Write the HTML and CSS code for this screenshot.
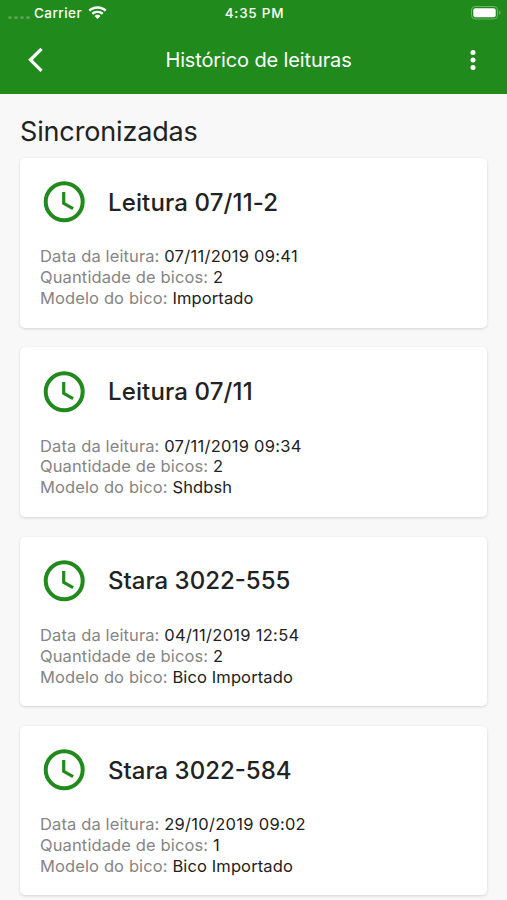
FILE: index.html
```html
<!DOCTYPE html>
<html lang="pt-BR">
<head>
<meta charset="utf-8">
<title>Histórico de leituras</title>
<link rel="stylesheet" href="styles.css">
</head>
<body>
<header>
  <div class="status">
    <div class="carrier"><i></i><i></i><i></i><i></i><span>Carrier</span>
      <svg class="wifi" width="19" height="14" viewBox="0 0 20 14" fill="#fff"><path d="M10 0C6.200 0 3 1.300.5 3.700L2.300 5.500C4.400 3.500 7 2.500 10 2.500s5.600 1 7.700 3l1.800-1.800C17 1.300 13.800 0 10 0z"/><path d="M10 4.500c-2.500 0-4.700.9-6.300 2.500l1.800 1.800C6.700 7.600 8.200 7 10 7s3.300.6 4.500 1.800L16.300 7C14.700 5.400 12.500 4.500 10 4.500z"/><path d="M10 8.900c-1.300 0-2.300.4-3.100 1.300L10 13.300l3.100-3.100C12.300 9.300 11.300 8.900 10 8.900z"/></svg>
    </div>
    <div class="time">4:35 PM</div>
    <svg class="battery" width="30" height="14" viewBox="0 0 30 14"><rect x=".5" y=".5" width="26" height="12.500" rx="3.500" fill="none" stroke="#6db46b"/><rect x="2.300" y="2.300" width="22.400" height="9" rx="2" fill="#fff"/><path d="M28 4.800q1.500.5 1.500 2t-1.500 2z" fill="#6db46b"/></svg>
  </div>
  <div class="toolbar">
    <svg class="back" width="18" height="28" viewBox="0 0 18 28"><path d="M14.500 2.800L3.500 13.800l11 11" fill="none" stroke="#fff" stroke-width="3.300"/></svg>
    <h1>Histórico de leituras</h1>
    <svg class="more" width="8" height="22" viewBox="0 0 8 22" fill="#fff"><circle cx="4" cy="3.600" r="2.500"/><circle cx="4" cy="11" r="2.500"/><circle cx="4" cy="18.400" r="2.500"/></svg>
  </div>
</header>
<main>
  <h2>Sincronizadas</h2>
  <article class="card">
    <div class="head"><svg class="clock" viewBox="0 0 42 42"><circle cx="21.200" cy="20.800" r="18.500"/><path d="M20.700 11v11.300l9.400 5.300"/></svg><h3 class="wide">Leitura 07/11-2</h3></div>
    <p>Data da leitura: <b class="date">07/11/2019 09:41</b></p><p>Quantidade de bicos: <b>2</b></p><p>Modelo do bico: <b>Importado</b></p>
  </article>
  <article class="card">
    <div class="head"><svg class="clock" viewBox="0 0 42 42"><circle cx="21.200" cy="20.800" r="18.500"/><path d="M20.700 11v11.300l9.400 5.300"/></svg><h3 class="wide">Leitura 07/11</h3></div>
    <p>Data da leitura: <b class="date">07/11/2019 09:34</b></p><p>Quantidade de bicos: <b>2</b></p><p>Modelo do bico: <b>Shdbsh</b></p>
  </article>
  <article class="card">
    <div class="head"><svg class="clock" viewBox="0 0 42 42"><circle cx="21.200" cy="20.800" r="18.500"/><path d="M20.700 11v11.300l9.400 5.300"/></svg><h3>Stara 3022-555</h3></div>
    <p>Data da leitura: <b class="date">04/11/2019 12:54</b></p><p>Quantidade de bicos: <b>2</b></p><p>Modelo do bico: <b>Bico Importado</b></p>
  </article>
  <article class="card">
    <div class="head"><svg class="clock" viewBox="0 0 42 42"><circle cx="21.200" cy="20.800" r="18.500"/><path d="M20.700 11v11.300l9.400 5.300"/></svg><h3>Stara 3022-584</h3></div>
    <p>Data da leitura: <b class="date">29/10/2019 09:02</b></p><p>Quantidade de bicos: <b>1</b></p><p>Modelo do bico: <b>Bico Importado</b></p>
  </article>
</main>
</body>
</html>
```
FILE: styles.css
```css
* { box-sizing: border-box; margin: 0; padding: 0; }
body { height: 900px; overflow: hidden; background: #f8f8f8; color: #222; font-family: Inter, sans-serif; }
svg { display: block; flex: none; }
header { height: 94px; background: #218a1c; color: #fff; }
.status { height: 26px; display: grid; grid-template-columns: 1fr auto 1fr; align-items: center; padding: 0 6px 0 8px; font-size: 13.500px; font-weight: 500; }
.carrier { display: flex; align-items: center; letter-spacing: .45px; }
.carrier i { width: 4px; height: 3px; margin: 8px 2px 0 0; border-radius: 50%; background: #58a555; }
.carrier span { margin-left: 2px; }
.wifi { margin-left: 6px; }
.time { letter-spacing: .75px; }
.battery { justify-self: end; }
.toolbar { height: 68px; display: grid; grid-template-columns: 60px 1fr 60px; align-items: center; }
.back { margin-left: 27px; }
.more { margin-left: 22px; }
h1 { padding-left: 10px; text-align: center; font-size: 20px; font-weight: 400; letter-spacing: -.13px; }
main { padding: 20px 20px 0; }
h2 { height: 44px; line-height: 36px; font-size: 27px; font-weight: 400; letter-spacing: -.15px; }
.card { height: 169.600px; margin-bottom: 19.700px; padding: 20.300px 20px; background: #fff; border-radius: 5px; box-shadow: 0 1px 3px rgba(0,0,0,.15); }
.head { height: 48px; margin-bottom: 20px; display: flex; align-items: center; }
.clock { width: 42px; height: 42px; margin-left: 3px; fill: none; stroke: #218a1c; stroke-width: 4; }
.clock path { stroke-width: 3.200; }
h3 { margin-left: 23px; font-size: 24px; font-weight: 500; }
.wide { letter-spacing: .13px; }
p { height: 20.900px; line-height: 21px; font-size: 16.500px; letter-spacing: .12px; color: #858585; white-space: nowrap; }
b { font-weight: 400; color: #222; }
.date { letter-spacing: .28px; }
```
